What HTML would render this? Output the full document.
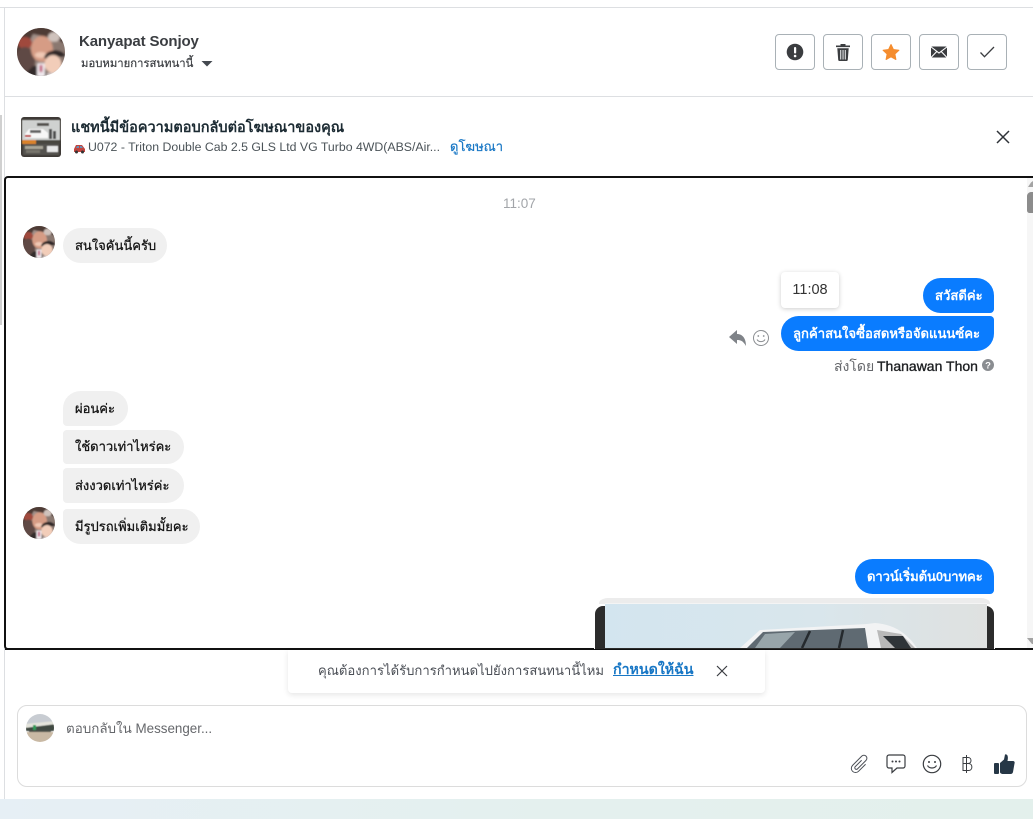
<!DOCTYPE html>
<html lang="th"><head><meta charset="utf-8"><title>Chat</title>
<style>
html,body{margin:0;padding:0;background:#fff}
body{width:1033px;height:819px;position:relative;overflow:hidden;font-family:"Liberation Sans","DejaVu Sans",sans-serif;color:#1c1e21}
.a{position:absolute;box-sizing:border-box}
.t{position:absolute;white-space:nowrap}
.btn{position:absolute;top:34px;width:40px;height:36px;box-sizing:border-box;border:1px solid #a9b1b6;border-radius:4px;background:#fff}
.btn svg{position:absolute;left:0;top:0}
.in{position:absolute;left:63px;height:35px;background:#f0f0f0;border-radius:18px;font-size:13px;line-height:35px;padding:0 12px;box-sizing:border-box;white-space:nowrap;color:#111;-webkit-text-stroke:.25px #111}
.out{position:absolute;right:39px;height:35px;background:#0a7cff;color:#fff;border-radius:18px;font-size:13.1px;line-height:35px;padding:0 12px;box-sizing:border-box;white-space:nowrap;font-weight:700}
</style></head><body>
<svg width="0" height="0" style="position:absolute"><defs>
<filter id="bl" x="-20%" y="-20%" width="140%" height="140%"><feGaussianBlur stdDeviation="1"/></filter>
<filter id="bs" x="-10%" y="-10%" width="120%" height="120%"><feGaussianBlur stdDeviation=".4"/></filter>
<clipPath id="c1"><circle cx="24" cy="24" r="24"/></clipPath>
<g id="av"><g clip-path="url(#c1)"><rect width="48" height="48" fill="#8a7870"/><g filter="url(#bl)">
<rect x="-4" y="-4" width="56" height="18" fill="#a08f88"/>
<path d="M-3 10 14 0 30-3 52 2 50 16 34 10 16 6 8 22-3 26Z" fill="#4e3a34"/>
<ellipse cx="8" cy="15" rx="7" ry="6" fill="#a04a3e"/>
<ellipse cx="8" cy="32" rx="10" ry="13" fill="#5f4a45"/>
<ellipse cx="25" cy="21" rx="11" ry="13" fill="#d69c85"/>
<ellipse cx="24" cy="27" rx="6" ry="3" fill="#f0c8b4"/>
<ellipse cx="37" cy="9" rx="6" ry="5" fill="#cfc2bc"/>
<path d="M6 48 16 38 28 38 30 52Z" fill="#332b2b"/>
<rect x="20" y="35" width="8" height="14" fill="#efe9ed"/><rect x="22.500" y="37" width="3" height="7" fill="#c2587c"/>
<path d="M27 30C29 20 46 20 50 30L47 28 30 31Z" fill="#2e2525"/>
<ellipse cx="36" cy="36" rx="8.500" ry="9" fill="#f2cdb9"/>
<rect x="30" y="45" width="18" height="6" fill="#d8cfd0"/>
</g></g></g>
</defs></svg>

<!-- frame lines -->
<div class="a" style="left:0;top:0;width:1033px;height:8px;background:#fff;border-bottom:1px solid #dddfe2"></div>
<div class="a" style="left:4px;top:8px;width:1px;height:791px;background:#dddfe2"></div>
<div class="a" style="left:0;top:115px;width:2px;height:210px;background:#d0d0d0"></div>

<!-- header -->
<svg class="a" style="left:17px;top:28px" width="48" height="48"><use href="#av"/></svg>
<div class="t" style="left:79px;top:32.500px;font-size:15px;line-height:18px;font-weight:700;letter-spacing:-.13px;color:#3a3d41">Kanyapat Sonjoy</div>
<div class="t" style="left:81px;top:57px;font-size:11.300px;line-height:15px;color:#3a3d41;-webkit-text-stroke:.2px #3a3d41">มอบหมายการสนทนานี้</div>
<svg class="a" style="left:201px;top:61px" width="12" height="6"><path d="M.5 0H11.500L6 5.500Z" fill="#444950"/></svg>

<div class="btn" style="left:775px"><svg width="38" height="34"><circle cx="19" cy="17" r="8.300" fill="#3b3d40"/><rect x="18" y="12" width="2.200" height="6.500" rx="1" fill="#fff"/><circle cx="19.100" cy="21" r="1.300" fill="#fff"/></svg></div>
<div class="btn" style="left:823px"><svg width="38" height="34"><path d="M12 10.500h14v1.600H12zM16.500 10.500V9h5v1.500z" fill="#3b3d40"/><path d="M13.300 13.200h11.400l-.9 11.600c0 .7-.5 1.200-1.200 1.200h-7.200c-.7 0-1.200-.5-1.200-1.200z" fill="#3b3d40"/><path d="M16 15h1.300v9.500H16zM18.400 15h1.300v9.500h-1.300zM20.700 15H22v9.500h-1.300z" fill="#c9cbcd"/></svg></div>
<div class="btn" style="left:871px"><svg width="38" height="34"><path d="M19 9.500l2.400 5 5.500.7-4 3.800 1 5.500-4.900-2.700-4.900 2.700 1-5.500-4-3.800 5.500-.7z" fill="#f58d2e" stroke="#f58d2e" stroke-width="1" stroke-linejoin="round"/></svg></div>
<div class="btn" style="left:919px"><svg width="38" height="34"><rect x="11" y="11.500" width="16" height="11" rx="1" fill="#3b3d40"/><path d="M10.500 11.500 19 18l8.500-6.500M10.500 23l6.300-6.500M27.500 23l-6.300-6.500" fill="none" stroke="#fff" stroke-width="1.100"/></svg></div>
<div class="btn" style="left:967px"><svg width="38" height="34"><path d="M12.500 17.500l4 4.200 9.500-9.700" fill="none" stroke="#3b3d40" stroke-width="1.300"/></svg></div>

<div class="a" style="left:5px;top:96px;width:1028px;height:1px;background:#dddfe2"></div>

<!-- ad banner -->
<svg class="a" style="left:21px;top:117px" width="40" height="40"><rect width="40" height="40" rx="3" fill="#3e3a36"/><g filter="url(#bs)"><rect x="1" y="3" width="38" height="20" fill="#cfd1d0"/><path d="M16 6h12v3H16z" fill="#55534f"/><path d="M4 17l4-5h14l5 4v5H4z" fill="#f7f7f7"/><rect x="9" y="13" width="11" height="3" fill="#666"/><rect x="4" y="18" width="6" height="2" fill="#b33"/><path d="M28 12h3v10h-3zM32 14h3v8h-3z" fill="#4f4f4f"/><rect x="1" y="23" width="14" height="4" fill="#d9822b"/><rect x="15" y="23" width="24" height="4" fill="#4a4640"/><rect x="2" y="27" width="36" height="11" fill="#55534f"/><rect x="26" y="29" width="11" height="6" fill="#e8e8e8"/><rect x="4" y="29" width="18" height="3" fill="#a8a498"/><rect x="5" y="33" width="14" height="3" fill="#77756c"/></g></svg>
<div class="t" style="left:71px;top:119px;font-size:14.500px;line-height:18px;font-weight:700;color:#1c2b33">แชทนี้มีข้อความตอบกลับต่อโฆษณาของคุณ</div>
<svg class="a" style="left:73px;top:143px" width="13" height="11"><path d="M1 6l2-4h6l3 4v3H1z" fill="#c0453f"/><path d="M4 3h2v2H3zM7 3h1.500l1.500 2H7z" fill="#6b8fb5"/><circle cx="3.500" cy="9" r="1.500" fill="#333"/><circle cx="9.500" cy="9" r="1.500" fill="#333"/></svg>
<div class="t" style="left:88px;top:140px;font-size:12.300px;line-height:15px;color:#4b5358">U072 - Triton Double Cab 2.5 GLS Ltd VG Turbo 4WD(ABS/Air...</div>
<div class="t" style="left:450px;top:139px;font-size:13px;line-height:16px;color:#1877c5;-webkit-text-stroke:.2px #1877c5">ดูโฆษณา</div>
<svg class="a" style="left:996px;top:130px" width="14" height="14"><path d="M1 1l12 12M13 1L1 13" stroke="#2f3338" stroke-width="1.500" fill="none"/></svg>

<!-- chat box -->
<div class="a" style="left:4px;top:176px;width:1040px;height:474px;border:2px solid #111;border-radius:4px;background:#fff;overflow:hidden"></div>
<div class="a" style="left:1027px;top:178px;width:6px;height:470px;background:#f6f6f6"></div>
<svg class="a" style="left:1027px;top:181px" width="6" height="32"><path d="M6 0V6H1L4 1.500 6 0Z" fill="#a3a3a3"/><path d="M6 11V32H3C1 32 0 31 0 29V15C0 13 2 11 4 11Z" fill="#8c8c8c"/></svg>
<svg class="a" style="left:1027px;top:638px" width="6" height="7"><path d="M0 0H6V6L5 6Z" fill="#a3a3a3"/></svg>

<div class="t" style="left:503px;top:196px;font-size:13.500px;line-height:16px;color:#a2a5a9">11:07</div>

<svg class="a" style="left:23px;top:226px" width="32" height="32" viewBox="0 0 48 48"><use href="#av"/></svg>
<div class="in" style="top:228px;width:104px">สนใจคันนี้ครับ</div>

<div class="out" style="top:278px;width:71px;border-radius:18px 18px 4px 18px">สวัสดีค่ะ</div>
<div class="out" style="top:316px;width:213px;border-radius:18px 4px 18px 18px">ลูกค้าสนใจซื้อสดหรือจัดแนนซ์คะ</div>

<div class="a" style="left:781px;top:272px;width:58px;height:36px;background:#fff;border-radius:4px;box-shadow:0 1px 5px rgba(0,0,0,.2);font-size:14.500px;line-height:36px;text-align:center;color:#333">11:08</div>

<svg class="a" style="left:728px;top:329px" width="20" height="18"><path d="M1 8 9 1V5C15 5 18 10 18 17 15 12 13 11 9 11V15Z" fill="#7f8388"/></svg>
<svg class="a" style="left:752px;top:329px" width="18" height="18"><circle cx="9" cy="9" r="7.500" fill="none" stroke="#8a8d91" stroke-width="1"/><circle cx="6.300" cy="7" r=".9" fill="#8a8d91"/><circle cx="11.700" cy="7" r=".9" fill="#8a8d91"/><path d="M5 10.500c1.500 2.800 6.500 2.800 8 0" fill="none" stroke="#8a8d91"/></svg>

<div class="t" style="left:834px;top:358px;font-size:14px;line-height:16px;color:#65676b">ส่งโดย</div>
<div class="t" style="left:877px;top:358px;font-size:14px;line-height:16px;color:#1c1e21;-webkit-text-stroke:.35px #1c1e21">Thanawan Thon</div>
<svg class="a" style="left:982px;top:359px" width="12" height="12"><circle cx="6" cy="6" r="6" fill="#8a8d91"/><text x="6" y="9.500" font-size="9.500" font-weight="700" font-family="Liberation Sans" fill="#fff" text-anchor="middle">?</text></svg>

<div class="in" style="top:391px;width:65px;border-radius:18px 18px 18px 4px">ผ่อนค่ะ</div>
<div class="in" style="top:430px;width:121px;height:34px;line-height:34px;border-radius:4px 18px 18px 4px">ใช้ดาวเท่าไหร่คะ</div>
<div class="in" style="top:468px;width:121px;border-radius:4px 18px 18px 4px">ส่งงวดเท่าไหร่ค่ะ</div>
<svg class="a" style="left:23px;top:507px" width="32" height="32" viewBox="0 0 48 48"><use href="#av"/></svg>
<div class="in" style="top:509px;width:137px;border-radius:4px 18px 18px 18px">มีรูปรถเพิ่มเติมมั้ยคะ</div>

<div class="out" style="top:559px;width:139px;border-radius:18px 18px 4px 18px;letter-spacing:-.1px">ดาวน์เริ่มต้น0บาทคะ</div>

<!-- image card -->
<div class="a" style="left:594px;top:598px;width:401px;height:52px;background:#fff;border-radius:14px 14px 0 0;overflow:hidden">
<div class="a" style="left:1px;top:8px;width:399px;height:44px;background:#2c2c2c;border-radius:8px 8px 0 0"></div>
<div class="a" style="left:5px;top:0;width:391px;height:6px;background:#ececec;border-radius:10px 10px 0 0"></div>
<div class="a" style="left:11px;top:5px;width:382px;height:1px;background:#f4f4f4"></div>
<svg class="a" style="left:11px;top:6px" width="382" height="44"><defs><linearGradient id="sky" x1="0" x2="1" y1="0" y2="0"><stop offset="0" stop-color="#d3e5ef"/><stop offset=".55" stop-color="#d9e6ec"/><stop offset="1" stop-color="#dfe1e0"/></linearGradient></defs><rect width="382" height="44" fill="url(#sky)"/>
<path d="M135 44 155 26 262 20 270 19C285 20 300 26 312 44Z" fill="#f2f3f4"/>
<path d="M142 44 158 28 260 24 263 44Z" fill="#5f6a72"/>
<path d="M160 30 190 28 175 44H150Z" fill="#98a5aa"/>
<path d="M205 27 197 44M238 26 234 44" stroke="#252a2e" stroke-width="2.500"/>
<path d="M272 26 296 30 310 44H276Z" fill="#b9b9b9"/><path d="M278 32 H298 L306 44H290Z" fill="#2f3438"/>
</svg>
</div>

<div class="a" style="left:5px;top:649px;width:1028px;height:1px;background:#111"></div>

<!-- notice -->
<div class="a" style="left:288px;top:650px;width:477px;height:43px;background:#fff;border-radius:0 0 4px 4px;box-shadow:0 2px 6px rgba(0,0,0,.1)"></div>
<div class="t" style="left:318px;top:662px;font-size:13.100px;line-height:17px;color:#4b4f56">คุณต้องการได้รับการกำหนดไปยังการสนทนานี้ไหม</div>
<div class="t" style="left:613px;top:662px;font-size:14.200px;line-height:17px;color:#1877c5;text-decoration:underline;font-weight:700">กำหนดให้ฉัน</div>
<svg class="a" style="left:716px;top:665px" width="12" height="12"><path d="M1 1l10 10M11 1L1 11" stroke="#3a3d41" stroke-width="1.200" fill="none"/></svg>

<!-- composer -->
<div class="a" style="left:17px;top:705px;width:1010px;height:82px;border:1px solid #dcdcdc;border-radius:10px;background:#fff"></div>
<svg class="a" style="left:26px;top:714px" width="28" height="28"><defs><clipPath id="c2"><circle cx="14" cy="14" r="14"/></clipPath></defs><g clip-path="url(#c2)"><g filter="url(#bs)"><rect x="-2" y="-2" width="32" height="14" fill="#c8ccd2"/><rect x="-2" y="10" width="32" height="7" fill="#3f4a42"/><path d="M-2 10 30 7V10L-2 14Z" fill="#e4e4dc"/><rect x="7" y="11" width="3" height="8" fill="#2f9a58"/><rect x="-2" y="18" width="32" height="12" fill="#c9b9a4"/><rect x="3" y="16" width="22" height="2" fill="#4a4f48"/></g></g></svg>
<div class="t" style="left:66px;top:720px;font-size:13.400px;line-height:17px;color:#65676b">ตอบกลับใน Messenger...</div>

<svg class="a" style="left:850px;top:754px" width="20" height="20"><g transform="translate(9.500 9.800) rotate(45)"><path d="M-1 -4V5a1.600 1.600 0 0 0 3.200 0V-7a3 3 0 0 0-6 0V6a4.200 4.200 0 0 0 8.400 0V-4" fill="none" stroke="#4b4f56" stroke-width="1"/></g></svg>
<svg class="a" style="left:886px;top:754px" width="20" height="20"><path d="M3 1h14a2 2 0 0 1 2 2v9a2 2 0 0 1-2 2h-6l-5 4.500V14H3a2 2 0 0 1-2-2V3a2 2 0 0 1 2-2z" fill="none" stroke="#3a3d41" stroke-width="1.200"/><circle cx="6.500" cy="7.500" r="1" fill="#3a3d41"/><circle cx="10" cy="7.500" r="1" fill="#3a3d41"/><circle cx="13.500" cy="7.500" r="1" fill="#3a3d41"/></svg>
<svg class="a" style="left:922px;top:754px" width="20" height="20"><circle cx="10" cy="10" r="8.700" fill="none" stroke="#3a3d41" stroke-width="1.200"/><circle cx="7" cy="8" r="1" fill="#3a3d41"/><circle cx="13" cy="8" r="1" fill="#3a3d41"/><path d="M5.500 11.500c1.800 3.300 7.200 3.300 9 0" fill="none" stroke="#3a3d41" stroke-width="1.200"/></svg>
<svg class="a" style="left:960px;top:754px" width="14" height="20"><path d="M3 3.500h5c4 0 4 6 0 6H3zM3 9.500h5.500c4.500 0 4.500 7 0 7H3zM3 3v14M6.500 1v18" fill="none" stroke="#3a3d41" stroke-width="1"/></svg>
<svg class="a" style="left:993px;top:753px" width="22" height="22"><rect x="1" y="10" width="5" height="11" rx="1" fill="#263746"/><path d="M7 10 11 6.500 12 1.500c2.500-.5 3.500 2 2.500 6.500H20c1.500 0 2 1.500 1.500 2.500L20 19c-.3 1.300-1 2-2.500 2H10c-1.500 0-3-.8-3-2Z" fill="#263746"/></svg>

<!-- background strip -->
<div class="a" style="left:0;top:799px;width:1033px;height:20px;background:linear-gradient(90deg,#e6eff5 0%,#e4f0ee 55%,#e3f0ec 100%)"></div>
</body></html>
